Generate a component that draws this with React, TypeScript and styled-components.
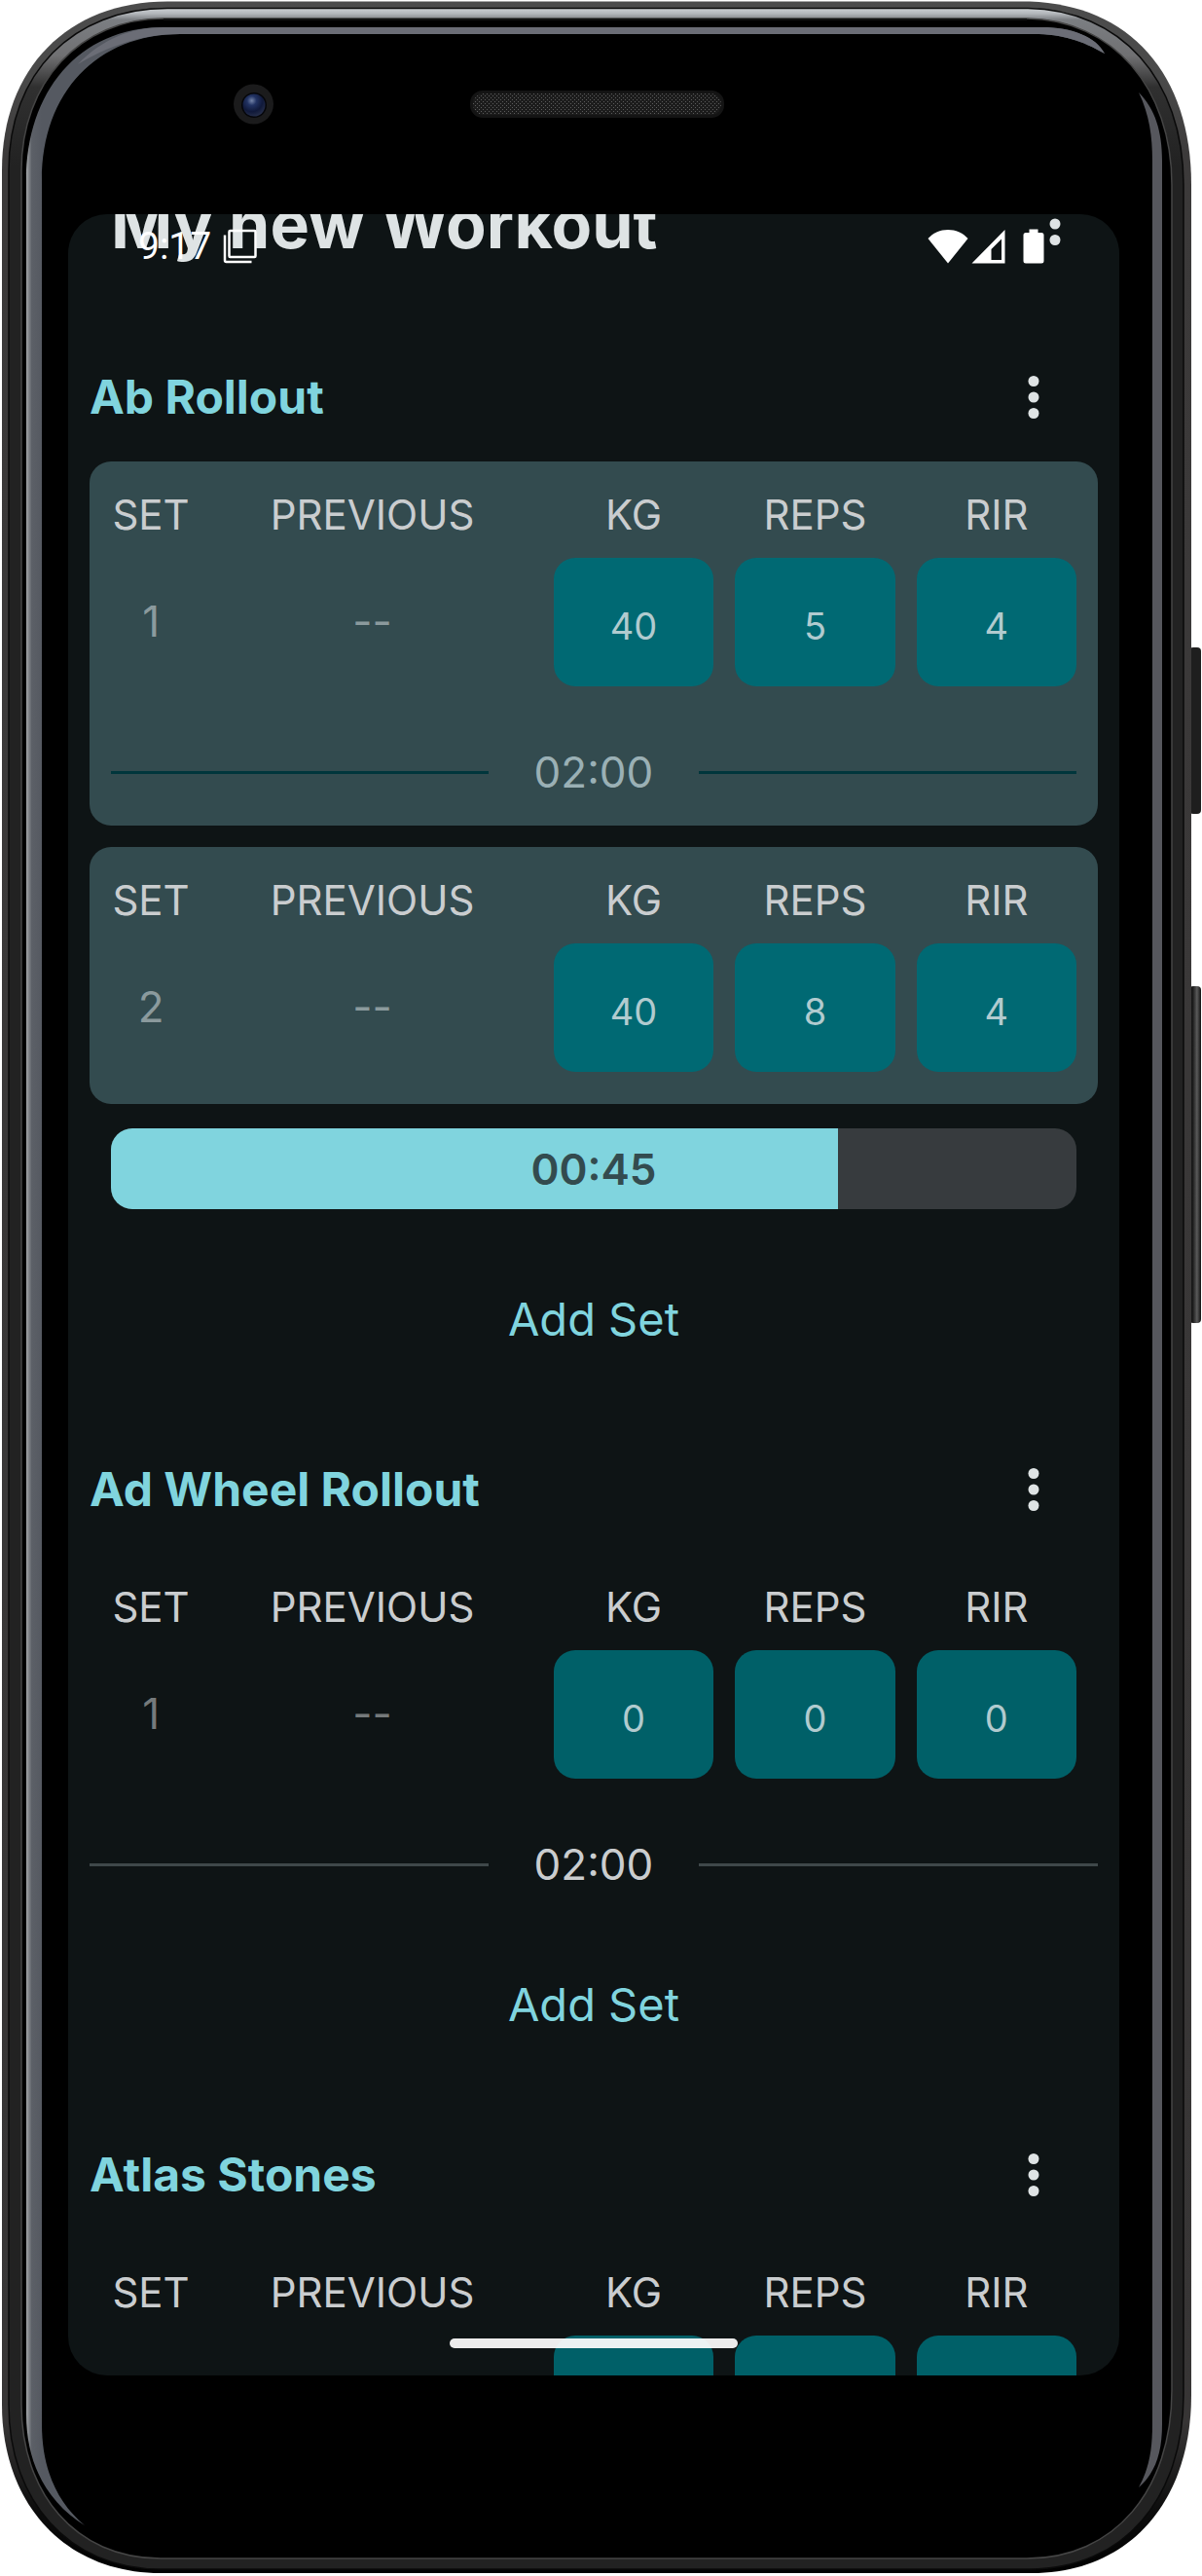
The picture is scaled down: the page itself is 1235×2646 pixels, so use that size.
import React, { useId } from "react";
import styled, { createGlobalStyle } from "styled-components";

const color = {
  background: "#0e1415",
  card: "#334b4f",
  primary: "#80d4de",
  onSurface: "#dee3e4",
  caption: "#cacdcf",
  field: "#006068",
  fieldActive: "#006973",
  fieldText: "#b1cbcf",
  outline: "#3f484a",
  track: "#373b3e",
};

const GlobalStyle = createGlobalStyle`
  *, *::before, *::after { box-sizing: border-box; }
  body { margin: 0; background: #ffffff; }
`;

const Device = styled.div`
  position: relative;
  display: grid;
  grid-template-rows: minmax(0, 1fr);
  width: 100%;
  height: 100vh;
  min-height: 1200px;
  padding: 220px 85px 206px 70px;
  font-family: Inter, "Liberation Sans", sans-serif;
`;

const FrameDrawing = styled.svg`
  position: absolute;
  inset: 0;
  width: 100%;
  height: 100%;
`;

const Screen = styled.div`
  position: relative;
  overflow: hidden;
  border-radius: 40px;
  background: ${color.background};
`;

const StatusBar = styled.div`
  position: absolute;
  inset: 0 0 auto 0;
  display: flex;
  align-items: center;
  justify-content: space-between;
  height: 66px;
  padding: 0 77px 0 72px;
  color: #ffffff;
`;

const StatusGroup = styled.div<{ $gap: number }>`
  display: flex;
  align-items: center;
  gap: ${(p) => p.$gap}px;
`;

const Clock = styled.time`
  font-family: Roboto, sans-serif;
  font-size: 39px;
  line-height: 44px;
`;

const HomeIndicator = styled.div`
  position: absolute;
  left: 50%;
  bottom: 28px;
  width: 296px;
  height: 10px;
  margin-left: -148px;
  border-radius: 5px;
  background: rgba(255, 255, 255, 0.92);
`;

const ScrolledContent = styled.main`
  margin-top: -56px;
`;

const TitleRow = styled.header`
  display: flex;
  align-items: center;
  justify-content: space-between;
  height: 132px;
  margin-bottom: 46px;
  padding-left: 44px;
`;

const Title = styled.h1`
  margin: 0;
  color: ${color.onSurface};
  font-size: 68px;
  font-weight: 700;
  line-height: 88px;
  white-space: nowrap;
`;

const MenuButton = styled.button`
  display: flex;
  align-items: center;
  justify-content: center;
  width: 132px;
  height: 132px;
  padding: 0;
  border: 0;
  background: none;
  color: ${color.onSurface};
`;

const Exercise = styled.section`
  display: flex;
  flex-direction: column;
  padding: 0 22px;
  margin-bottom: 44px;
`;

const ExerciseHeader = styled.div`
  display: flex;
  align-items: center;
  justify-content: space-between;
  height: 132px;
`;

const ExerciseName = styled.h2`
  margin: 0;
  color: ${color.primary};
  font-size: 48px;
  font-weight: 700;
  line-height: 66px;
`;

const SetList = styled.div`
  display: flex;
  flex-direction: column;
  gap: 22px;
`;

const SetCard = styled.div<{ $active: boolean }>`
  border-radius: 22px;
  background: ${(p) => (p.$active ? color.card : "transparent")};
`;

const SetGrid = styled.div`
  display: grid;
  grid-template-columns: 1fr 4fr 2fr 2fr 2fr;
  column-gap: 22px;
  padding: 22px 22px 33px;
`;

const Column = styled.div`
  display: flex;
  flex-direction: column;
  align-items: center;
  gap: 11px;
  min-width: 0;
`;

const Caption = styled.span`
  color: ${color.caption};
  font-size: 42px;
  line-height: 66px;
  white-space: nowrap;
`;

const CaptionLabel = styled(Caption).attrs({ as: "label" })<{ htmlFor?: string }>``;

const Value = styled.span<{ $active: boolean }>`
  color: ${(p) => (p.$active ? "#8b9a9d" : "#757a7b")};
  font-size: 44px;
  line-height: 130px;
  white-space: nowrap;
`;

const NumberField = styled.input<{ $active: boolean }>`
  width: 100%;
  height: 132px;
  padding: 8px 0 0;
  border: 0;
  border-radius: 22px;
  background: ${(p) => (p.$active ? color.fieldActive : color.field)};
  color: ${color.fieldText};
  font: 400 38px Inter, "Liberation Sans", sans-serif;
  text-align: center;
`;

const RestRow = styled.div<{ $active: boolean }>`
  display: flex;
  align-items: center;
  height: 110px;
  padding: 0 ${(p) => (p.$active ? 22 : 0)}px;
  color: ${(p) => (p.$active ? "#9ab0b5" : color.caption)};

  &::before,
  &::after {
    content: "";
    flex: 1;
    height: 3px;
    background: ${(p) => (p.$active ? "#00363c" : color.outline)};
  }
`;

const RestTime = styled.time`
  width: 216px;
  font-size: 44px;
  line-height: 66px;
  text-align: center;
`;

const Countdown = styled.div`
  display: grid;
  height: 83px;
  margin: 25px 22px 24px;
  overflow: hidden;
  border-radius: 22px;
  background: ${color.track};
`;

const CountdownFill = styled.div`
  grid-area: 1 / 1;
  background: ${color.primary};
`;

const CountdownTime = styled.time`
  grid-area: 1 / 1;
  place-self: center;
  color: ${color.card};
  font-size: 44px;
  font-weight: 600;
  line-height: 66px;
`;

const AddSetButton = styled.button`
  width: 100%;
  height: 132px;
  margin-top: 22px;
  padding: 0;
  border: 0;
  background: none;
  color: ${color.primary};
  font: 400 47px Inter, "Liberation Sans", sans-serif;
`;

type WorkoutSet = { kg: number; reps: number; rir: number; rest?: string };
type ExerciseData = {
  name: string;
  active: boolean;
  sets: WorkoutSet[];
  countdown?: { time: string; percent: number };
};

const exercises: ExerciseData[] = [
  {
    name: "Ab Rollout",
    active: true,
    sets: [
      { kg: 40, reps: 5, rir: 4, rest: "02:00" },
      { kg: 40, reps: 8, rir: 4 },
    ],
    countdown: { time: "00:45", percent: 75.3 },
  },
  {
    name: "Ad Wheel Rollout",
    active: false,
    sets: [{ kg: 0, reps: 0, rir: 0, rest: "02:00" }],
  },
  {
    name: "Atlas Stones",
    active: false,
    sets: [{ kg: 0, reps: 0, rir: 0, rest: "02:00" }],
  },
];

function MoreIcon() {
  return (
    <svg width="66" height="66" viewBox="0 0 24 24" fill="currentColor" aria-hidden="true">
      <circle cx="12" cy="6" r="2" />
      <circle cx="12" cy="12" r="2" />
      <circle cx="12" cy="18" r="2" />
    </svg>
  );
}

function LayersIcon() {
  return (
    <svg width="36" height="36" viewBox="0 0 36 36" fill="none" stroke="#fff" strokeWidth="2.5" aria-hidden="true">
      <rect x="6.5" y="2" width="27" height="27" rx="1" />
      <path d="M2 6.500V32.500a1.500 1.500 0 0 0 1.500 1.500H29.500" />
    </svg>
  );
}

function WifiIcon() {
  return (
    <svg width="42" height="36" viewBox="0 0 42 36" fill="#fff" aria-hidden="true">
      <path d="M21 35.500L0.500 10C6 4 13 1 21 1s15 3 20.500 9z" />
    </svg>
  );
}

function SignalIcon() {
  return (
    <svg width="35" height="36" viewBox="0 0 35 36" fill="#fff" aria-hidden="true">
      <path fillRule="evenodd" d="M34.500 1V35.500H0.500zM31 10.500L20.500 21V32H31z" />
    </svg>
  );
}

function BatteryIcon() {
  return (
    <svg width="22" height="36" viewBox="0 0 22 36" fill="#fff" aria-hidden="true">
      <path d="M6.500 0.500h9V4H19a2.500 2.500 0 0 1 2.500 2.500V33a2.500 2.500 0 0 1-2.500 2.500H3A2.500 2.500 0 0 1 0.500 33V6.500A2.500 2.500 0 0 1 3 4h3.500z" />
    </svg>
  );
}

function PhoneFrame() {
  return (
    <FrameDrawing viewBox="0 0 1235 2646" preserveAspectRatio="none" aria-hidden="true">
      <defs>
        <linearGradient id="shell" gradientUnits="userSpaceOnUse" x1="0" y1="0" x2="0" y2="2646">
          <stop offset="0" stopColor="#4c4c4c" />
          <stop offset="0.03" stopColor="#4a4a4a" />
          <stop offset="0.06" stopColor="#3c3a3a" />
          <stop offset="0.94" stopColor="#373535" />
          <stop offset="0.975" stopColor="#0c0c0c" />
          <stop offset="1" stopColor="#000" />
        </linearGradient>
        <linearGradient id="rim" gradientUnits="userSpaceOnUse" x1="0" y1="9" x2="0" y2="170">
          <stop offset="0" stopColor="#c9cdd0" />
          <stop offset="0.03" stopColor="#b4b8bc" />
          <stop offset="0.07" stopColor="#7b7e82" />
          <stop offset="0.3" stopColor="#707072" />
          <stop offset="0.5" stopColor="#303030" />
          <stop offset="1" stopColor="#222" />
        </linearGradient>
        <linearGradient id="glassLeft" gradientUnits="userSpaceOnUse" x1="27" y1="0" x2="43" y2="0">
          <stop offset="0" stopColor="#a3a6a9" />
          <stop offset="0.35" stopColor="#5c6067" />
          <stop offset="1" stopColor="#555961" />
        </linearGradient>
        <linearGradient id="key" gradientUnits="userSpaceOnUse" x1="1222" y1="0" x2="1234" y2="0">
          <stop offset="0" stopColor="#101010" />
          <stop offset="0.3" stopColor="#1c1c1c" />
          <stop offset="0.65" stopColor="#5a5a5a" />
          <stop offset="1" stopColor="#111" />
        </linearGradient>
        <radialGradient id="lens" cx="0.4" cy="0.3" r="0.7">
          <stop offset="0" stopColor="#7484a8" />
          <stop offset="0.3" stopColor="#223363" />
          <stop offset="0.7" stopColor="#10193a" />
          <stop offset="1" stopColor="#242c48" />
        </radialGradient>
        <pattern id="mesh" width="4" height="4" patternUnits="userSpaceOnUse">
          <rect width="4" height="4" fill="#1c1c1c" />
          <rect width="1" height="1" x="0" y="0" fill="#5c5c5c" />
          <rect width="1" height="1" x="2" y="2" fill="#5c5c5c" />
        </pattern>
      </defs>

      <rect x="1222" y="665" width="12" height="171" rx="4" fill="#1e1e1e" />
      <rect x="1222" y="1013" width="12" height="346" rx="4" fill="url(#key)" />

      <path
        d="M172 1.500H1058C1160 5 1224 75 1224 190V2460C1224 2570 1160 2643 1060 2643H165C65 2643 2 2570 2 2470V175C2 70 70 1.500 172 1.500z"
        fill="url(#shell)"
      />
      <path
        d="M172 8.500H1056C1150 10 1216 80 1216 190V2460C1216 2565 1155 2639 1058 2639H165C70 2639 9 2568 9 2470V175C9 75 75 8.500 172 8.500z"
        fill="url(#rim)"
        stroke="#0a0a0a"
        strokeWidth="1.500"
      />
      <path
        d="M168 19H1055C1143 20 1204 90 1204 190V2455C1204 2558 1145 2628 1055 2628H165C77 2628 22 2560 22 2470V175C22 85 82 19 168 19z"
        fill="#000"
        stroke="#454545"
        strokeWidth="1.500"
      />
      <path d="M168 20H1055" stroke="#111" strokeWidth="2" />

      <path
        d="M87 2594C48 2570 27 2530 27 2480V185C27 95 80 28 168 28H1070C1102 28 1126 38 1135 55C1112 42 1092 35 1062 35H185C100 35 43 95 43 185V2490C43 2535 58 2570 87 2594z"
        fill="url(#glassLeft)"
      />
      <path d="M80 66C105 40 135 28 168 28H1070C1102 28 1126 38 1135 55C1112 42 1092 35 1062 35H185C145 35 110 48 80 66z" fill="#6b6d76" />
      <path
        d="M1170 95C1187 112 1194 135 1194 165V2490C1194 2520 1187 2540 1170 2555C1181 2535 1184 2515 1184 2490V165C1184 140 1181 118 1170 95z"
        fill="#56575d"
      />

      <circle cx="260.500" cy="107" r="20.500" fill="#1b1b1c" />
      <circle cx="261" cy="108" r="13" fill="#05060a" />
      <circle cx="261" cy="108" r="11.500" fill="url(#lens)" />
      <rect x="483" y="93" width="261" height="28" rx="13" fill="#141414" />
      <rect x="486" y="96" width="255" height="22" rx="11" fill="url(#mesh)" />
    </FrameDrawing>
  );
}

function NumberColumn({ label, value, active }: { label: string; value: number; active: boolean }) {
  const id = useId();
  return (
    <Column>
      <CaptionLabel htmlFor={id}>{label}</CaptionLabel>
      <NumberField id={id} $active={active} inputMode="numeric" defaultValue={value} />
    </Column>
  );
}

function SetBlock({ index, set, active }: { index: number; set: WorkoutSet; active: boolean }) {
  return (
    <SetCard $active={active}>
      <SetGrid>
        <Column>
          <Caption>SET</Caption>
          <Value $active={active}>{index}</Value>
        </Column>
        <Column>
          <Caption>PREVIOUS</Caption>
          <Value $active={active}>--</Value>
        </Column>
        <NumberColumn label="KG" value={set.kg} active={active} />
        <NumberColumn label="REPS" value={set.reps} active={active} />
        <NumberColumn label="RIR" value={set.rir} active={active} />
      </SetGrid>
      {set.rest && (
        <RestRow $active={active}>
          <RestTime>{set.rest}</RestTime>
        </RestRow>
      )}
    </SetCard>
  );
}

export default function App() {
  return (
    <>
      <GlobalStyle />
      <Device>
        <PhoneFrame />
        <Screen>
          <ScrolledContent>
            <TitleRow>
              <Title>My new Workout</Title>
              <MenuButton aria-label="Workout options">
                <MoreIcon />
              </MenuButton>
            </TitleRow>
            {exercises.map((exercise) => (
              <Exercise key={exercise.name}>
                <ExerciseHeader>
                  <ExerciseName>{exercise.name}</ExerciseName>
                  <MenuButton aria-label={`${exercise.name} options`}>
                    <MoreIcon />
                  </MenuButton>
                </ExerciseHeader>
                <SetList>
                  {exercise.sets.map((set, i) => (
                    <SetBlock key={i} index={i + 1} set={set} active={exercise.active} />
                  ))}
                </SetList>
                {exercise.countdown && (
                  <Countdown>
                    <CountdownFill style={{ width: `${exercise.countdown.percent}%` }} />
                    <CountdownTime>{exercise.countdown.time}</CountdownTime>
                  </Countdown>
                )}
                <AddSetButton>Add Set</AddSetButton>
              </Exercise>
            ))}
          </ScrolledContent>
          <StatusBar>
            <StatusGroup $gap={12}>
              <Clock>9:17</Clock>
              <LayersIcon />
            </StatusGroup>
            <StatusGroup $gap={18}>
              <StatusGroup $gap={3}>
                <WifiIcon />
                <SignalIcon />
              </StatusGroup>
              <BatteryIcon />
            </StatusGroup>
          </StatusBar>
          <HomeIndicator />
        </Screen>
      </Device>
    </>
  );
}
